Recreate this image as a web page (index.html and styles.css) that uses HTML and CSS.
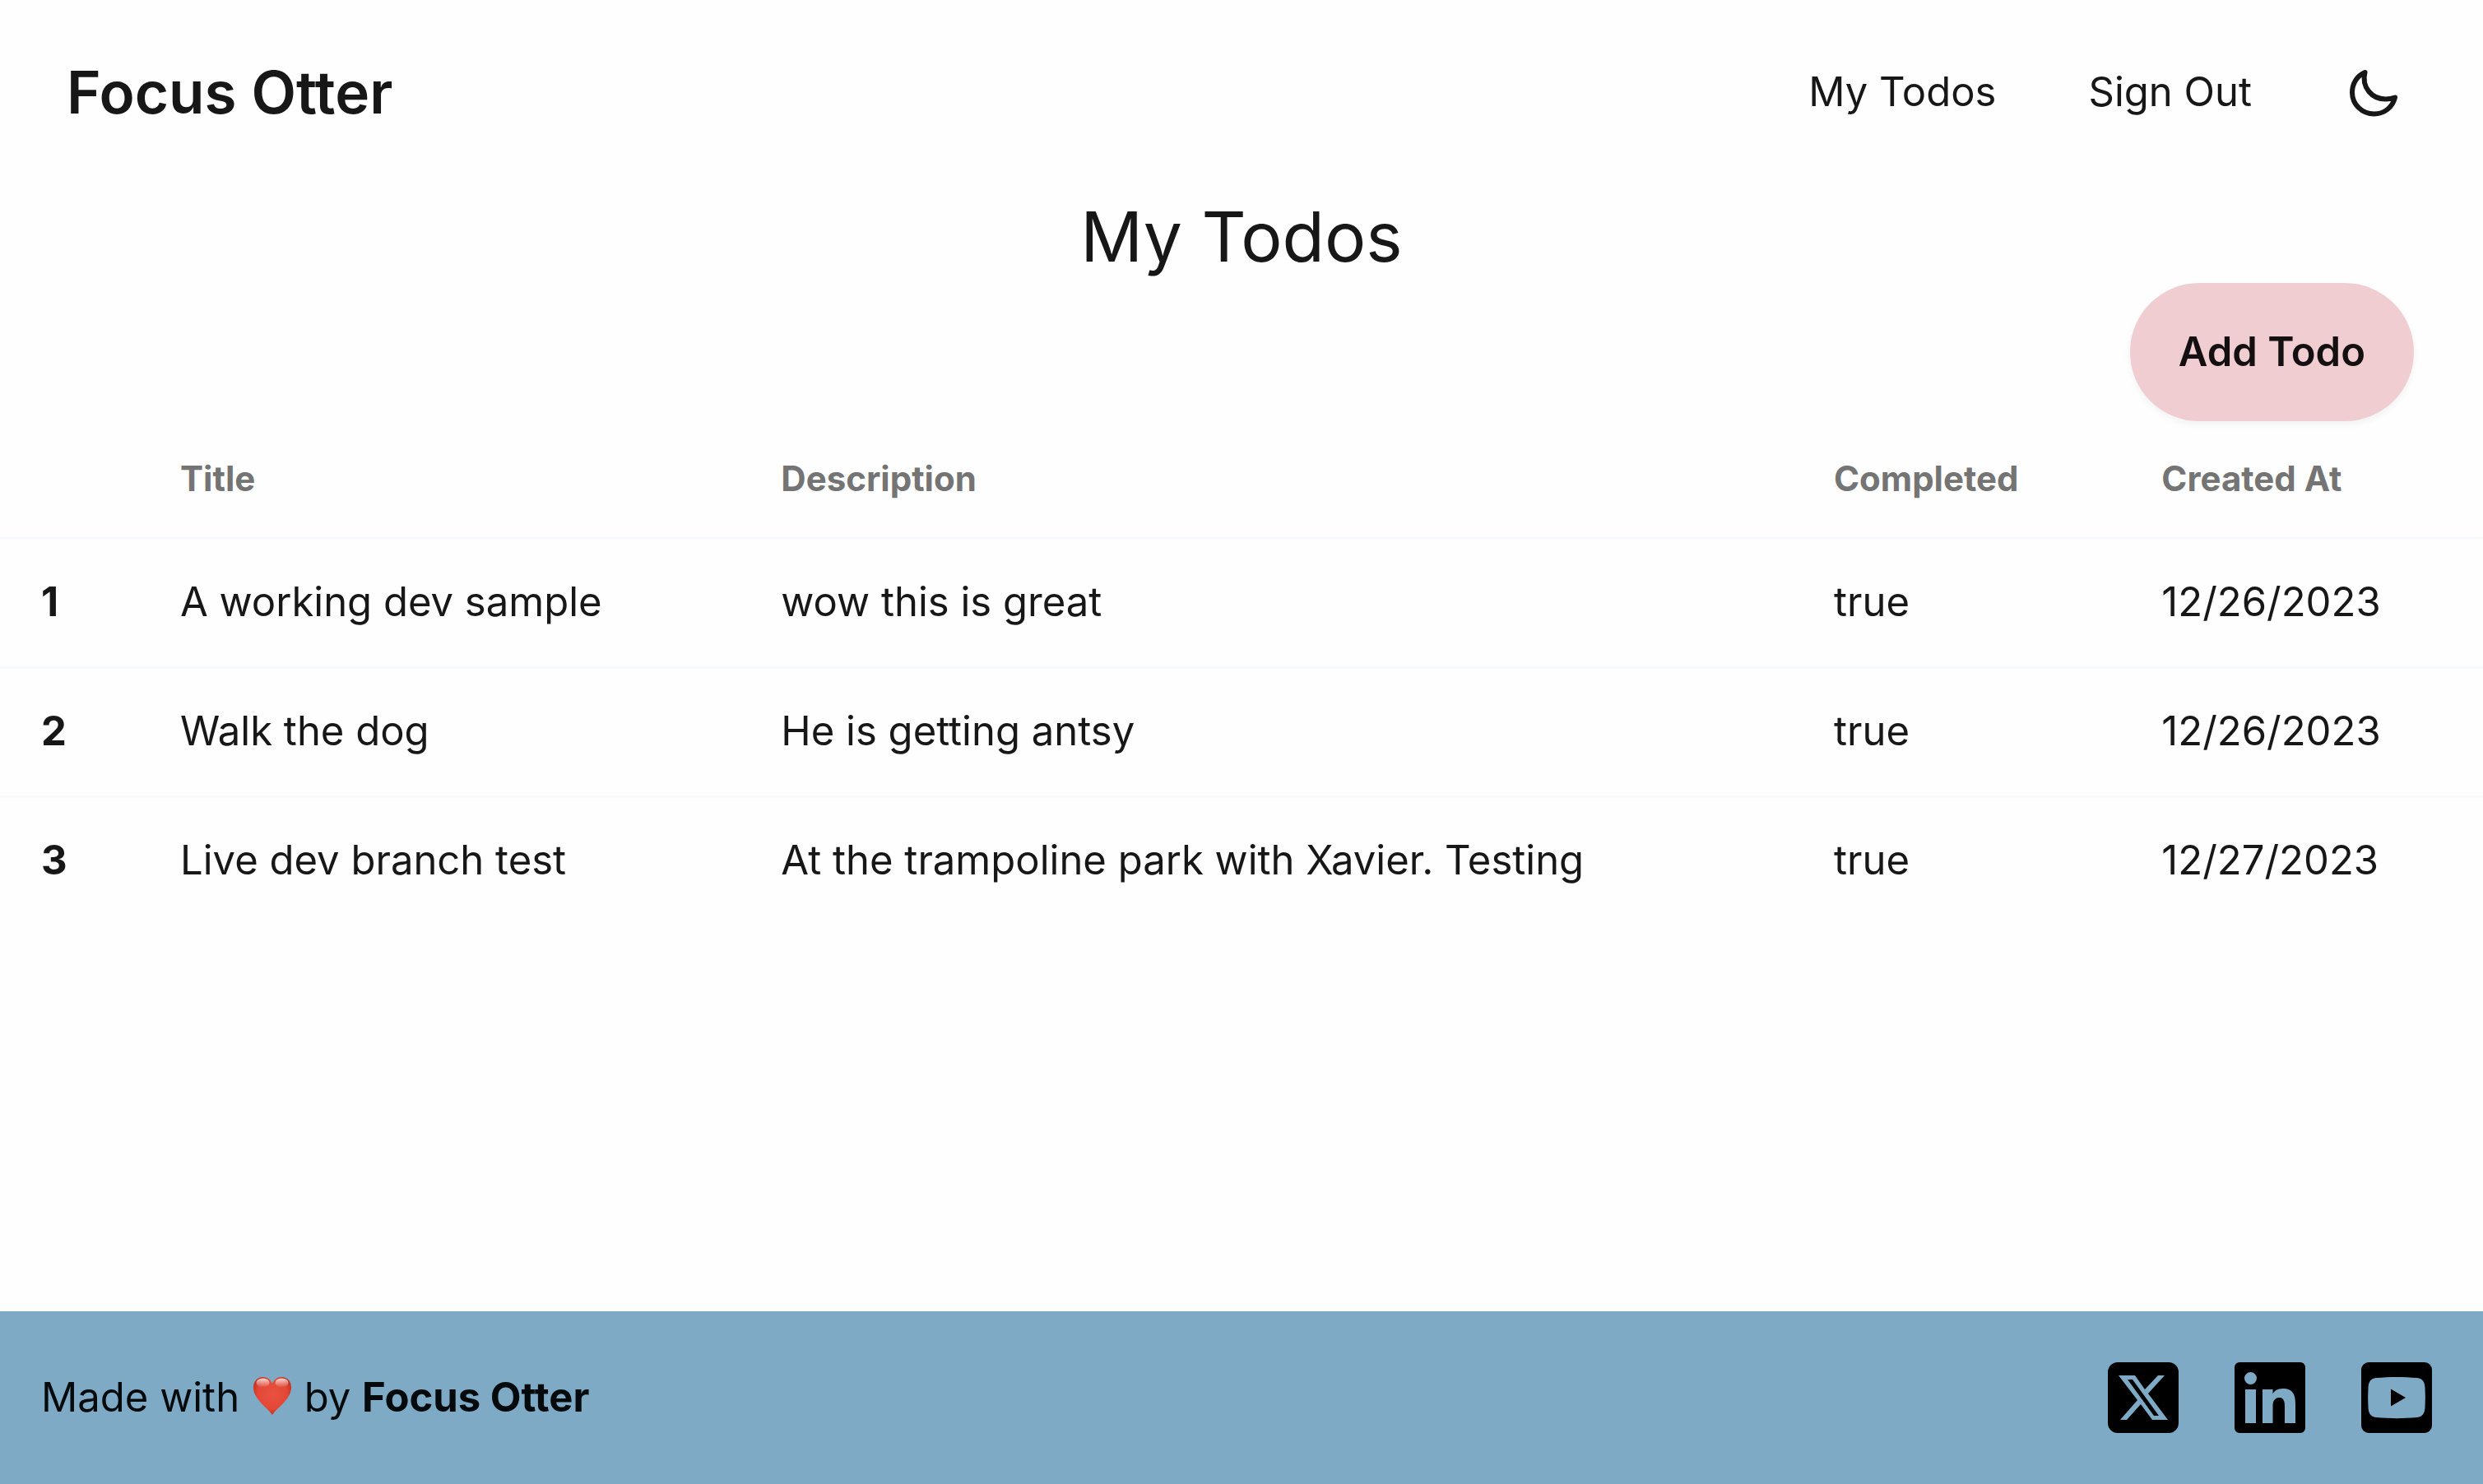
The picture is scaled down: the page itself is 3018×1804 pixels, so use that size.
FILE: index.html
```html
<!DOCTYPE html>
<html lang="en">
<head>
<meta charset="utf-8">
<meta name="viewport" content="width=device-width, initial-scale=1">
<title>My Todos - Focus Otter</title>
<link rel="stylesheet" href="styles.css">
</head>
<body>
<header class="navbar">
  <a class="brand" href="#">Focus Otter</a>
  <nav class="nav">
    <a class="nav-link" href="#">My Todos</a>
    <button class="nav-link" type="button">Sign Out</button>
    <button class="theme-toggle" type="button" aria-label="Toggle theme">
      <svg class="moon" viewBox="9 6 72 72" aria-hidden="true"><path d="M34.500 18C25 22 19 31.500 19 42.500 19 57 31 68.500 45.500 68.500 58 68.500 68 60.500 71 48.500 67 50 63 50.500 59.500 50.500 43 50.500 30 36 34.500 18Z"/></svg>
    </button>
  </nav>
</header>
<main class="content">
  <h1 class="page-title">My Todos</h1>
  <div class="actions"><button class="add-button" type="button">Add Todo</button></div>
  <table class="todos">
    <colgroup><col class="col-number"><col class="col-title"><col class="col-description"><col class="col-completed"><col class="col-created"></colgroup>
    <thead>
      <tr><td></td><th scope="col">Title</th><th scope="col">Description</th><th scope="col">Completed</th><th scope="col">Created At</th></tr>
    </thead>
    <tbody>
      <tr><th scope="row">1</th><td>A working dev sample</td><td>wow this is great</td><td>true</td><td>12/26/2023</td></tr>
      <tr><th scope="row">2</th><td>Walk the dog</td><td>He is getting antsy</td><td>true</td><td>12/26/2023</td></tr>
      <tr><th scope="row">3</th><td>Live dev branch test</td><td>At the trampoline park with Xavier. Testing</td><td>true</td><td>12/27/2023</td></tr>
    </tbody>
  </table>
</main>
<footer class="footer">
  <p class="credit">Made with
    <svg class="heart" viewBox="0 0 46 46" role="img" aria-label="love">
      <defs>
        <radialGradient id="heart-fill" cx="50%" cy="45%" r="60%"><stop offset="0" stop-color="#ea5140"/><stop offset="0.65" stop-color="#e34836"/><stop offset="1" stop-color="#b92a1b"/></radialGradient>
        <linearGradient id="heart-shine" x1="0" y1="0" x2="0" y2="1"><stop offset="0" stop-color="#fff" stop-opacity="0.8"/><stop offset="1" stop-color="#fff" stop-opacity="0"/></linearGradient>
      </defs>
      <path fill="url(#heart-fill)" d="M23 46C19 39 0 27 0 13 0 5 5 0 11.500 0 17 0 21 3 23 8 25 3 29 0 34.500 0 41 0 46 5 46 13 46 27 27 39 23 46Z"/>
      <ellipse cx="11.500" cy="7" rx="8" ry="5.500" fill="url(#heart-shine)"/>
      <ellipse cx="34.500" cy="7" rx="8" ry="5.500" fill="url(#heart-shine)"/>
    </svg>
    by <strong>Focus Otter</strong></p>
  <nav class="social" aria-label="Social links">
    <a href="#" aria-label="X"><svg class="social-icon" viewBox="0 0 86 86"><path fill-rule="evenodd" d="M12 0H74A12 12 0 0 1 86 12V74A12 12 0 0 1 74 86H12A12 12 0 0 1 0 74V12A12 12 0 0 1 12 0ZM13 16 36 46 15 70H23L40 51 54 70H73L49 38 69 16H61L45 33 33 16ZM24 21H30L62 65H56Z"/></svg></a>
    <a href="#" aria-label="LinkedIn"><svg class="social-icon" viewBox="0 0 86 86"><path fill-rule="evenodd" d="M6 0H80A6 6 0 0 1 86 6V80A6 6 0 0 1 80 86H6A6 6 0 0 1 0 80V6A6 6 0 0 1 6 0ZM13 33V74H26V33ZM19.500 12A7.500 7.500 0 1 0 19.500 27 7.500 7.500 0 1 0 19.500 12ZM34 33V74H46.500V54C46.500 48 48 43 54.500 43 60.500 43 61 49 61 54V74H74V51C74 40 71.500 32 58.500 32 52 32 48 35 46.500 38.500V33Z"/></svg></a>
    <a href="#" aria-label="YouTube"><svg class="social-icon" viewBox="0 0 86 86"><path fill-rule="evenodd" d="M9 0H77A9 9 0 0 1 86 9V77A9 9 0 0 1 77 86H9A9 9 0 0 1 0 77V9A9 9 0 0 1 9 0ZM18 19C11 20 9 24 8.500 31 8 39 8 47 8.500 55 9 62 11 66 18 67 34 68.500 52 68.500 68 67 75 66 77 62 77.500 55 78 47 78 39 77.500 31 77 24 75 20 68 19 52 17.500 34 17.500 18 19Z"/><path d="M36 32.500V53.500L54 43Z"/></svg></a>
  </nav>
</footer>
</body>
</html>
```
FILE: styles.css
```css
* {
  box-sizing: border-box;
}

body {
  display: flex;
  flex-direction: column;
  min-height: 100vh;
  margin: 0;
  background: #fefefe;
  color: #171717;
  font: 400 49px/72px Inter, "Liberation Sans", sans-serif;
}

a {
  color: inherit;
  text-decoration: none;
}

button {
  border: 0;
  background: none;
  color: inherit;
  font: inherit;
  cursor: pointer;
}

.navbar {
  display: flex;
  align-items: center;
  justify-content: space-between;
  height: 224px;
  padding: 0 97px 0 81px;
}

.brand {
  font-size: 71px;
  font-weight: 600;
}

.nav {
  display: flex;
  align-items: center;
  gap: 112px;
}

.nav-link,
.theme-toggle {
  padding: 0;
}

.moon {
  display: block;
  width: 72px;
  height: 72px;
  fill: none;
  stroke: currentColor;
  stroke-width: 6;
  stroke-linejoin: round;
}

.page-title {
  margin: 0;
  padding-top: 8px;
  font-size: 84px;
  font-weight: 400;
  line-height: 112px;
  text-align: center;
}

.actions {
  display: flex;
  justify-content: flex-end;
  padding: 0 84px;
}

.add-button {
  height: 168px;
  padding: 0 59px;
  border-radius: 84px;
  background: #f0cdd1;
  box-shadow: 0 4px 8px rgb(0 0 0 / 5%);
  color: #140f10;
  font-weight: 600;
}

.todos {
  width: 100%;
  table-layout: fixed;
  border-collapse: collapse;
  text-align: left;
}

.col-number {
  width: 5.6%;
}

.col-title {
  width: 24.2%;
}

.col-description {
  width: 42.4%;
}

.col-completed {
  width: 13.2%;
}

.todos th,
.todos td {
  padding: 40px 50px 42px;
}

.todos thead th {
  padding: 38px 50px 39px;
  color: #747474;
  font-size: 42px;
  font-weight: 700;
  line-height: 64px;
}

.todos thead td {
  padding: 0;
}

.todos tr:not(:last-child),
.todos thead tr {
  border-bottom: 3px solid #f9fafb;
}

.footer {
  display: flex;
  align-items: center;
  justify-content: space-between;
  height: 210px;
  margin-top: auto;
  padding: 0 62px 0 50px;
  background: #7eaac5;
  color: #050a0d;
}

.credit {
  margin: 0;
}

.credit strong {
  font-weight: 700;
}

.heart {
  width: 46px;
  height: 46px;
  margin: 0 2px 0 3px;
  vertical-align: -4px;
}

.social {
  display: flex;
  gap: 68px;
}

.social-icon {
  display: block;
  width: 86px;
  height: 86px;
  fill: #000;
}
```
